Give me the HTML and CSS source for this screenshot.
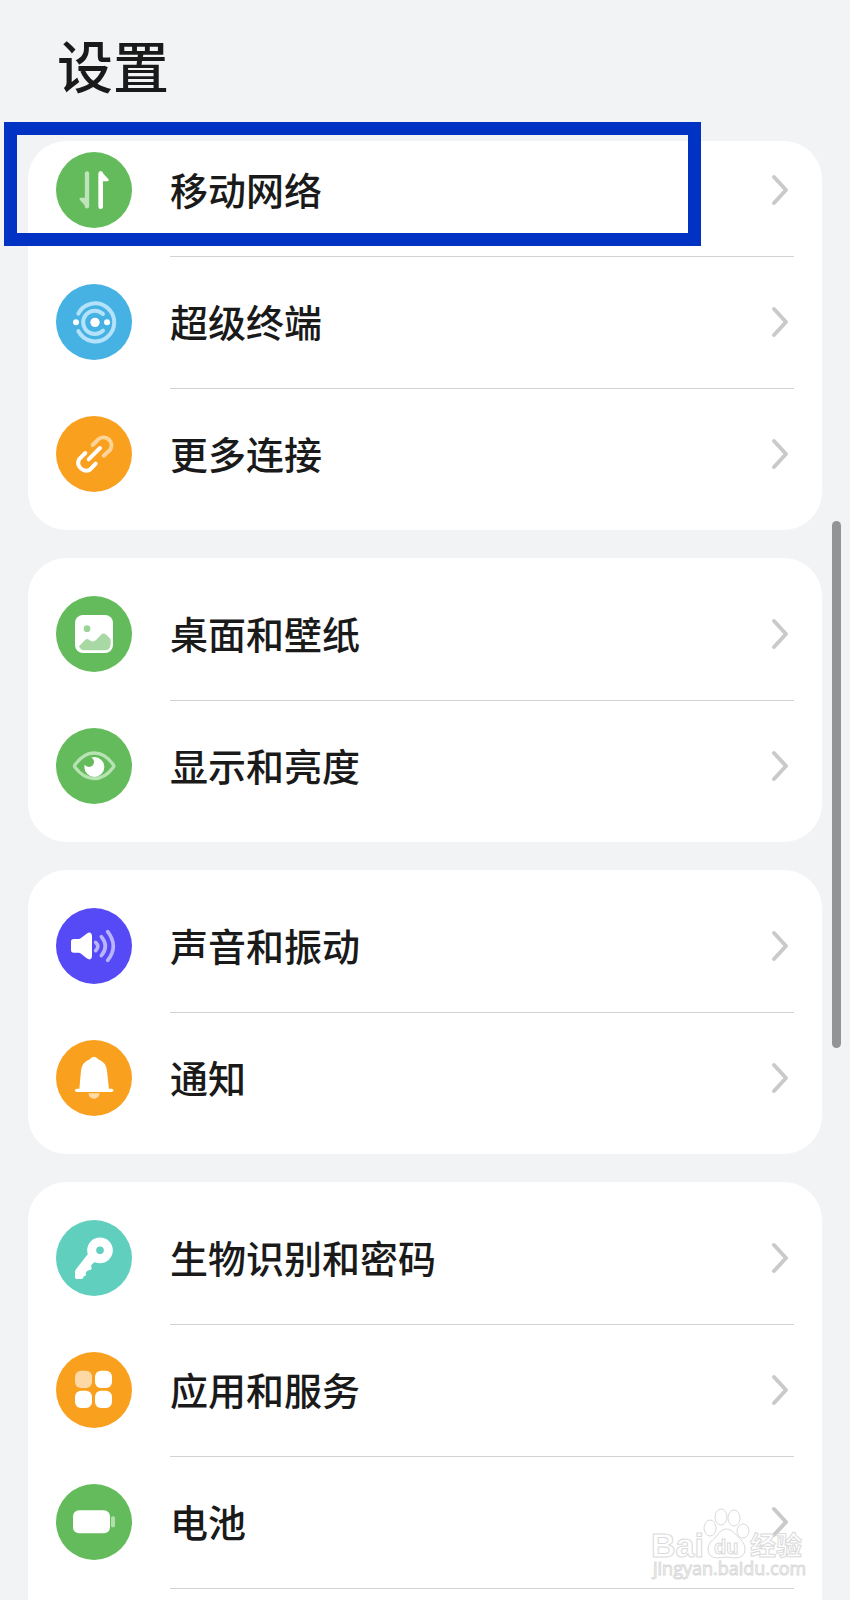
FILE: index.html
```html
<!DOCTYPE html>
<html lang="zh-CN">
<head>
    <meta charset="UTF-8">
    <meta name="viewport" content="width=device-width, initial-scale=1.0">
    <title>设置</title>
    <link rel="stylesheet" href="styles.css">
</head>
<body>
    <!-- Shared chevron -->
    <svg class="defs" aria-hidden="true">
        <symbol id="chevron" viewBox="0 0 20 34">
            <path d="M4 4 L16 17 L4 30" fill="none" stroke="#c9cacb" stroke-width="4" stroke-linecap="round" stroke-linejoin="round"/>
        </symbol>
    </svg>

    <div class="screen">
        <header class="title-bar">
            <h1>设置</h1>
        </header>

        <main class="settings">
            <nav class="card card-scrolled">
                <a class="row" href="#">
                    <svg class="icon green" viewBox="0 0 228 228">
                        <g fill="#bfe3ba" stroke="#bfe3ba" stroke-width="13" stroke-linecap="round">
                            <path d="M93 64 V163"/>
                            <path d="M93 141 H74 L93 163 Z" stroke-width="7" stroke-linejoin="round"/>
                        </g>
                        <g fill="#fff" stroke="#fff" stroke-width="14" stroke-linecap="round">
                            <path d="M134 65 V164"/>
                            <path d="M134 62 L155 84 H134 Z" stroke-width="7" stroke-linejoin="round"/>
                        </g>
                    </svg>
                    <span class="label">移动网络</span>
                    <svg class="chevron"><use href="#chevron"/></svg>
                </a>
                <a class="row" href="#">
                    <svg class="icon blue" viewBox="0 0 228 228">
                        <g fill="none" stroke="#b3e2fa" stroke-width="12" stroke-linecap="round">
                            <path d="M67 89 A57 57 0 1 1 67 141"/>
                            <path d="M141 90 A35 35 0 1 0 141 140"/>
                        </g>
                        <g fill="#fff">
                            <circle cx="117" cy="115" r="14"/>
                            <circle cx="60" cy="115" r="9"/>
                            <circle cx="153" cy="115" r="9"/>
                        </g>
                    </svg>
                    <span class="label">超级终端</span>
                    <svg class="chevron"><use href="#chevron"/></svg>
                </a>
                <a class="row" href="#">
                    <svg class="icon orange" viewBox="0 0 228 228">
                        <g fill="none" stroke-width="12" stroke-linecap="round">
                            <path d="M110 87 L128 69 A24 24 0 0 1 162 102 L143 119" stroke="#fdd497"/>
                            <path d="M88 111 L69 130 A24 24 0 0 0 102 161 L119 143" stroke="#fff"/>
                            <path d="M98 130 L132 96" stroke="#fff"/>
                        </g>
                    </svg>
                    <span class="label">更多连接</span>
                    <svg class="chevron"><use href="#chevron"/></svg>
                </a>
            </nav>

            <nav class="card">
                <a class="row" href="#">
                    <svg class="icon green" viewBox="0 0 228 228">
                        <rect x="57" y="57" width="114" height="114" rx="24" fill="#fff"/>
                        <circle cx="93" cy="98" r="10" fill="#9cd497"/>
                        <path d="M69 151 L87 132 Q93 127 99 131 Q110 141 120 132 L135 116 Q142 110 149 115 L161 126 Q164 129 164 134 V144 Q163 163 145 163 H84 Q74 163 69 151 Z" fill="#a8d9a4"/>
                    </svg>
                    <span class="label">桌面和壁纸</span>
                    <svg class="chevron"><use href="#chevron"/></svg>
                </a>
                <a class="row" href="#">
                    <svg class="icon green" viewBox="0 0 228 228">
                        <path d="M57 110 Q83 75 114 75 Q147 75 172 110 Q175 114 172 118 Q147 152 114 152 Q83 152 57 118 Q54 114 57 110 Z" fill="none" stroke="#b7e3b3" stroke-width="10"/>
                        <circle cx="115" cy="117" r="30" fill="#fff"/>
                        <circle class="eye-glint" cx="99" cy="102" r="15"/>
                    </svg>
                    <span class="label">显示和亮度</span>
                    <svg class="chevron"><use href="#chevron"/></svg>
                </a>
            </nav>

            <nav class="card">
                <a class="row" href="#">
                    <svg class="icon violet" viewBox="0 0 228 228">
                        <path d="M53 93 H68 Q72 93 75 90 L92 77 Q98 73 103 74 Q108 76 108 84 V144 Q108 152 103 154 Q98 155 92 151 L75 137 Q72 134 68 134 H53 Q45 134 45 126 V101 Q45 93 53 93 Z" fill="#fff"/>
                        <g fill="none" stroke="#b9b4fc" stroke-width="11" stroke-linecap="round">
                            <path d="M119 103 Q132 115 119 128"/>
                            <path d="M136 86 Q160 115 136 143"/>
                            <path d="M155 71 Q189 115 155 157"/>
                        </g>
                    </svg>
                    <span class="label">声音和振动</span>
                    <svg class="chevron"><use href="#chevron"/></svg>
                </a>
                <a class="row" href="#">
                    <svg class="icon orange" viewBox="0 0 228 228">
                        <path d="M97 160 H131 Q128 176 114 176 Q100 176 97 160 Z" fill="#fddca8"/>
                        <path d="M70 148 L75 92 Q77 68 101 58 Q107 50 114 50 Q121 50 127 58 Q151 68 153 92 L159 148 Z" fill="#fff"/>
                        <path d="M62 151 H167" stroke="#fff" stroke-width="10" stroke-linecap="round"/>
                    </svg>
                    <span class="label">通知</span>
                    <svg class="chevron"><use href="#chevron"/></svg>
                </a>
            </nav>

            <nav class="card card-continued">
                <a class="row" href="#">
                    <svg class="icon teal" viewBox="0 0 228 228">
                        <path d="M95 103 L60 148 Q57 152 57 157 V172 Q57 177 62 177 H75 Q80 177 82 173 L84 168 Q90 169 90 164 L89 159 L94 152 Q99 151 103 150 Q107 148 107 143 L105 138 Q107 133 112 129 L125 122 Z" fill="#fff"/>
                        <circle cx="132" cy="91" r="25" fill="none" stroke="#fff" stroke-width="27"/>
                    </svg>
                    <span class="label">生物识别和密码</span>
                    <svg class="chevron"><use href="#chevron"/></svg>
                </a>
                <a class="row" href="#">
                    <svg class="icon orange" viewBox="0 0 228 228">
                        <g fill="#fff">
                            <rect x="57" y="56" width="51" height="52" rx="18" fill="#fdd9a5"/>
                            <rect x="117" y="56" width="51" height="52" rx="18"/>
                            <rect x="57" y="116" width="51" height="52" rx="18"/>
                            <rect x="117" y="116" width="51" height="52" rx="18"/>
                        </g>
                    </svg>
                    <span class="label">应用和服务</span>
                    <svg class="chevron"><use href="#chevron"/></svg>
                </a>
                <a class="row" href="#">
                    <svg class="icon green" viewBox="0 0 228 228">
                        <rect x="51" y="79" width="111" height="69" rx="18" fill="#fff"/>
                        <rect x="165" y="97" width="12" height="33" rx="5" fill="#b0dfac"/>
                    </svg>
                    <span class="label">电池</span>
                    <svg class="chevron"><use href="#chevron"/></svg>
                </a>
            </nav>
        </main>

        <!-- Overlays -->
        <div class="highlight"></div>
        <div class="scrollbar"></div>
        <svg class="watermark" viewBox="0 0 160 80">
            <g fill="#fff" fill-opacity="0.5" stroke="#dadada" stroke-width="1">
                <ellipse cx="59" cy="27" rx="6" ry="8"/>
                <ellipse cx="70" cy="16" rx="6" ry="8"/>
                <ellipse cx="83" cy="17" rx="6" ry="8"/>
                <ellipse cx="92" cy="30" rx="6" ry="7"/>
                <path d="M75 28 Q81 28 86 35 Q94 41 94 48 Q94 57 84 57 Q75 55 67 57 Q57 57 57 48 Q57 42 65 36 Q70 28 75 28 Z"/>
                <text class="wm-latin" x="0" y="56" font-size="34">Bai</text>
                <text class="wm-latin" x="63" y="53" font-size="20">du</text>
                <text class="wm-cjk" x="99" y="54" font-size="26">经验</text>
                <text class="wm-url" x="2" y="74" font-size="18">jingyan.baidu.com</text>
            </g>
        </svg>
    </div>
</body>
</html>
```
FILE: styles.css
```css
* {
    box-sizing: border-box;
}
body {
    margin: 0;
    background-color: #f1f3f5;
    color: #1a1a1a;
    font-family: "Noto Sans CJK SC", sans-serif;
}
.defs {
    display: none;
}
.screen {
    position: relative;
    height: 100vh;
    overflow: hidden;
}
.title-bar {
    padding: 24px 57px 37px;
}
.title-bar h1 {
    margin: 0;
    font-size: 56px;
    line-height: 80px;
    font-weight: 500;
}
.settings {
    display: flex;
    flex-direction: column;
    gap: 28px;
    padding: 0 28px;
}
.card {
    padding: 10px 28px;
    border-radius: 38px;
    background-color: #fff;
}
.card-scrolled {
    padding-top: 0;
}
/* runs on below the fold */
.card-continued {
    padding-bottom: 142px;
}
.row {
    position: relative;
    display: flex;
    align-items: center;
    gap: 38px;
    height: 132px;
    color: inherit;
    text-decoration: none;
}
/* first row is partly scrolled under the title */
.card-scrolled .row:first-child {
    height: 115px;
    padding-bottom: 17px;
}
/* divider starts at the label, not under the icon */
.row:not(:last-child)::after,
.card-continued .row::after {
    content: "";
    position: absolute;
    left: 114px;
    right: 0;
    bottom: -1px;
    height: 1px;
    background-color: #d2d3d4;
}
.icon {
    flex: none;
    width: 76px;
    height: 76px;
    border-radius: 50%;
}
.green {
    background-color: #64bb5c;
}
.blue {
    background-color: #46b1e3;
}
.orange {
    background-color: #f9a01e;
}
.violet {
    background-color: #564af7;
}
.teal {
    background-color: #61cfbe;
}
.eye-glint {
    fill: #64bb5c;
}
.label {
    flex: 1;
    padding-bottom: 2px;
    font-size: 38px;
    line-height: 56px;
    font-weight: 500;
}
.chevron {
    flex: none;
    width: 20px;
    height: 34px;
    margin-right: 4px;
}
.highlight {
    position: absolute;
    top: 122px;
    left: 4px;
    width: 82%;
    height: 124px;
    border: 13px solid #0033c4;
}
.scrollbar {
    position: absolute;
    top: 521px;
    right: 9px;
    width: 9px;
    height: 527px;
    border-radius: 5px;
    background-color: #939496;
}
.watermark {
    position: absolute;
    right: 39px;
    bottom: 19px;
    width: 160px;
    height: 80px;
}
.wm-latin {
    font-family: "Liberation Sans", sans-serif;
    font-weight: 700;
}
.wm-cjk {
    font-family: "Noto Sans CJK SC", sans-serif;
    font-weight: 700;
}
.wm-url {
    font-family: "Open Sans", sans-serif;
}
```
